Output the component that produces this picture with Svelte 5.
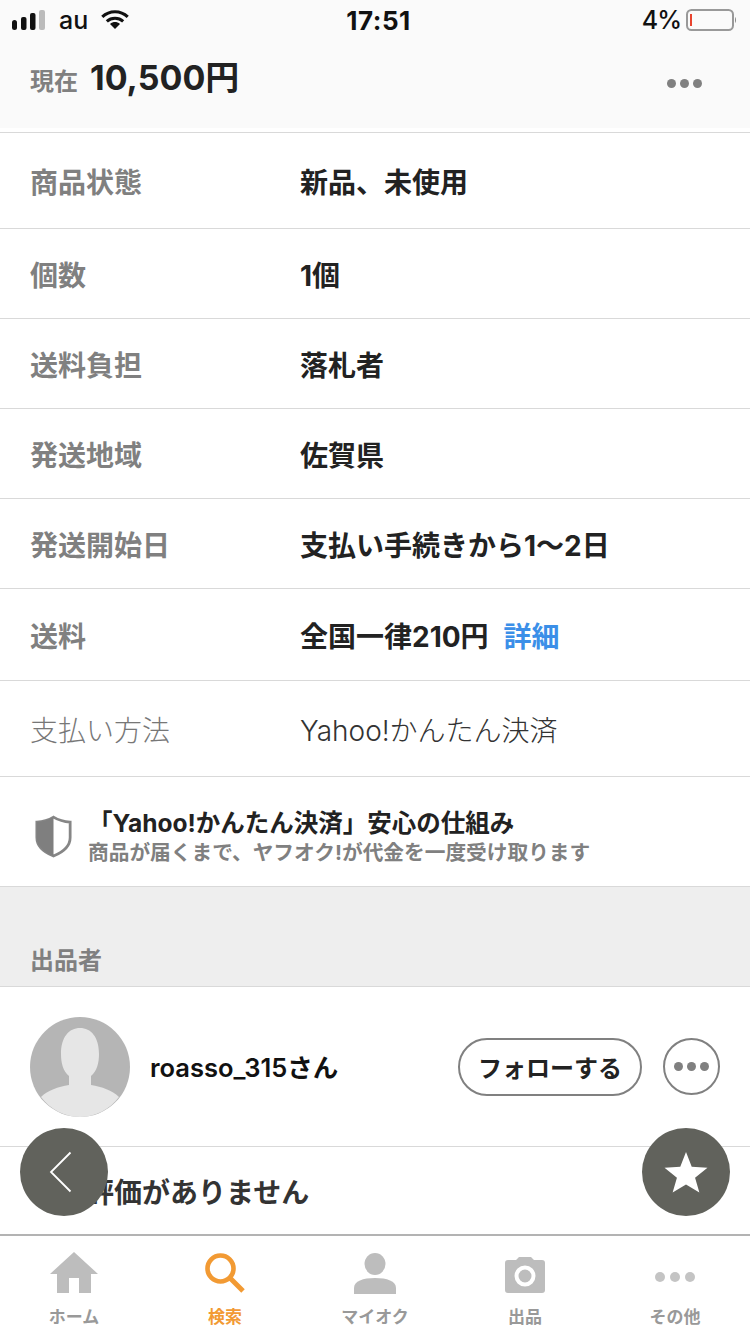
<script>
  const rows = [
    { label: '商品状態', value: '新品、未使用', h: 96 },
    { label: '個数', value: '1個', h: 90 },
    { label: '送料負担', value: '落札者', h: 90 },
    { label: '発送地域', value: '佐賀県', h: 90 },
    { label: '発送開始日', value: '支払い手続きから1〜2日', h: 90 },
    { label: '送料', value: '全国一律210円', link: '詳細', h: 92 },
    { label: '支払い方法', value: 'Yahoo!かんたん決済', plain: true, h: 96 }
  ];
</script>

<div class="page">
  <div class="content">
    <div class="top">
      <div class="status">
        <div class="status-left">
          <svg width="34" height="20" viewBox="0 0 34 20">
            <rect x="0" y="10" width="5" height="10" rx="2.5" fill="#111" />
            <rect x="9" y="7" width="5.500" height="13" rx="2" fill="#111" />
            <rect x="18" y="3" width="5.500" height="17" rx="2" fill="#111" />
            <rect x="27" y="0" width="6" height="20" rx="2" fill="#bbb" />
          </svg>
          <span class="carrier">au</span>
          <svg class="wifi" width="28" height="20" viewBox="0 0 30 22">
            <path d="M1 7.5C9 0 21 0 29 7.5" fill="none" stroke="#111" stroke-width="3.4" />
            <path d="M6 12.5C11 8 19 8 24 12.5" fill="none" stroke="#111" stroke-width="3.4" />
            <path d="M9.5 15.5C13 12.6 17 12.6 20.5 15.5L15 21Z" fill="#111" />
          </svg>
        </div>
        <span class="time">17:51</span>
        <div class="status-right">
          <span class="pct">4%</span>
          <svg width="50" height="24" viewBox="0 0 50 24">
            <rect x="1" y="2" width="46" height="20" rx="4.5" fill="none" stroke="#999" stroke-width="2" />
            <rect x="4" y="6" width="2" height="12" fill="#e8432e" />
            <path d="M49 9C50.3 10 50.3 14 49 15Z" fill="#888" />
          </svg>
        </div>
      </div>
      <div class="price-row">
        <span class="now">現在</span>
        <span class="price">10,500円</span>
        <div class="dots head-dots"><i></i><i></i><i></i></div>
      </div>
    </div>

    <div class="rows">
      {#each rows as row}
        <div class="row" style="height: {row.h}px">
          <span class="label" class:plain={row.plain}>{row.label}</span>
          <span class="value" class:plain={row.plain}>{row.value}{#if row.link}<a href="#top" class="link">{row.link}</a>{/if}</span>
        </div>
      {/each}
    </div>

    <div class="safe">
      <svg class="shield" width="37" height="45" viewBox="0 0 40 46">
        <path d="M20 2C25 5 31 7 38 7.5V24C38 33 30 40 20 44C10 40 2 33 2 24V7.5C9 7 15 5 20 2Z" fill="#fff" stroke="#868686" stroke-width="3" />
        <path d="M20 2C15 5 9 7 2 7.5V24C2 33 10 40 20 44Z" fill="#7f7f7f" />
      </svg>
      <div class="safe-text">
        <div class="safe-title">「Yahoo!かんたん決済」安心の仕組み</div>
        <div class="safe-sub">商品が届くまで、ヤフオク!が代金を一度受け取ります</div>
      </div>
    </div>

    <div class="section">出品者</div>

    <div class="seller">
      <svg class="avatar" width="100" height="100" viewBox="0 0 100 100">
        <circle cx="50" cy="50" r="50" fill="#b5b5b5" />
        <path d="M11 80C18 73 28 70 39 68V59C33 54 31 46 31 37C31 20 39 11 50 11C61 11 69 20 69 37C69 46 67 54 61 59V68C72 70 82 73 89 80C80 92 66 100 50 100C34 100 20 92 11 80Z" fill="#e6e6e6" />
      </svg>
      <span class="seller-name">roasso_315さん</span>
      <div class="follow">フォローする</div>
      <div class="more"><div class="dots"><i></i><i></i><i></i></div></div>
    </div>

    <div class="rating">評価がありません</div>
  </div>

  <button class="fab back" aria-label="戻る">
    <svg width="24" height="42" viewBox="0 0 24 42">
      <path d="M22.500 1.500L3 21L22.500 40.500" fill="none" stroke="#fff" stroke-width="1.800" />
    </svg>
  </button>
  <button class="fab star" aria-label="お気に入り">
    <svg width="44" height="42" viewBox="0 0 46 44">
      <path d="M23 1L29 16.500L45.500 17.500L32.500 28L37 43.500L23 35L9 43.500L13.500 28L0.500 17.500L17 16.500Z" fill="#fff" />
    </svg>
  </button>

  <nav class="tabs">
    <div class="tab first">
      <svg width="48" height="42" viewBox="0 0 48 42">
        <path d="M24 0L48 22H41V41H29V26H19V41H7V22H0Z" fill="#bdbdbd" />
      </svg>
      <span>ホーム</span>
    </div>
    <div class="tab active">
      <svg width="42" height="42" viewBox="0 0 42 42">
        <circle cx="16.500" cy="16.500" r="13" fill="none" stroke="#f29a33" stroke-width="4.600" />
        <path d="M26 26L39 39" fill="none" stroke="#f29a33" stroke-width="5" />
      </svg>
      <span>検索</span>
    </div>
    <div class="tab">
      <svg width="42" height="42" viewBox="0 0 42 42">
        <ellipse cx="21" cy="12" rx="10.500" ry="11" fill="#bdbdbd" />
        <path d="M0 42V36C0 29 9 26 21 26C33 26 42 29 42 36V42Z" fill="#bdbdbd" />
      </svg>
      <span>マイオク</span>
    </div>
    <div class="tab">
      <svg width="42" height="42" viewBox="0 0 42 42">
        <path d="M4 8H12L15 5H27L30 8H38C40 8 41 9 41 11V38C41 40 40 41 38 41H4C2 41 1 40 1 38V11C1 9 2 8 4 8Z" fill="#bdbdbd" />
        <circle cx="21" cy="24" r="8.500" fill="none" stroke="#fff" stroke-width="4" />
      </svg>
      <span>出品</span>
    </div>
    <div class="tab">
      <div class="tab-dots"><i></i><i></i><i></i></div>
      <span>その他</span>
    </div>
  </nav>
</div>

<style>
  :global(body) {
    margin: 0;
    background: #fff;
  }
  .page {
    position: relative;
    width: 750px;
    height: 1334px;
    overflow: hidden;
    display: flex;
    flex-direction: column;
    font-family: Inter, "Noto Sans CJK JP", sans-serif;
    color: #222;
  }
  .content {
    flex: 1;
    min-height: 0;
    overflow: hidden;
  }
  .top {
    height: 128px;
    background: #fafafa;
    margin-bottom: 4px;
  }
  .status {
    height: 40px;
    padding: 0 14px 0 12px;
    display: grid;
    grid-template-columns: 1fr auto 1fr;
    align-items: center;
    color: #111;
  }
  .status-left {
    display: flex;
    align-items: center;
    gap: 13px;
  }
  .status-left .wifi {
    margin-top: 0;
  }
  .carrier {
    font-size: 25px;
    font-weight: 500;
  }
  .time {
    font-size: 26px;
    font-weight: 700;
    letter-spacing: 0.5px;
    margin-left: 9px;
  }
  .status-right {
    display: flex;
    justify-content: flex-end;
    align-items: center;
    gap: 5px;
  }
  .pct {
    font-size: 25px;
    font-weight: 500;
    letter-spacing: -1px;
  }
  .price-row {
    display: flex;
    align-items: baseline;
    padding: 0 48px 0 30px;
    margin-top: 1px;
    height: 72px;
  }
  .now {
    font-size: 24px;
    font-weight: 700;
    color: #808080;
    margin-right: 12px;
  }
  .price {
    font-size: 34px;
    font-weight: 700;
    color: #222;
    line-height: 74px;
  }
  .dots {
    display: flex;
    gap: 4px;
  }
  .dots i {
    width: 9px;
    height: 9px;
    border-radius: 50%;
    background: #808080;
  }
  .head-dots {
    margin-left: auto;
    align-self: center;
    margin-top: 12px;
  }
  .row {
    display: flex;
    align-items: center;
    box-sizing: border-box;
    padding: 4px 30px 0;
    border-top: 1px solid #d9d9d9;
    font-size: 28px;
    line-height: 1;
  }
  .label {
    width: 270px;
    font-weight: 700;
    color: #808080;
  }
  .value {
    font-weight: 700;
    color: #222;
  }
  .label.plain,
  .value.plain {
    font-weight: 300;
    color: #777;
  }
  .value.plain {
    color: #333;
  }
  .link {
    color: #3b8fe8;
    text-decoration: none;
    margin-left: 15px;
  }
  .safe {
    height: 109px;
    border-top: 1px solid #d9d9d9;
    display: flex;
    align-items: center;
    padding-left: 35px;
    gap: 16px;
  }
  .shield {
    margin-top: 10px;
  }
  .safe-text {
    line-height: 1;
    margin-top: 12px;
  }
  .safe-title {
    font-size: 24.500px;
    font-weight: 700;
    color: #222;
    margin-bottom: 7px;
  }
  .safe-sub {
    font-size: 20.700px;
    font-weight: 700;
    color: #808080;
  }
  .section {
    height: 100px;
    box-sizing: border-box;
    background: #eee;
    border-top: 1px solid #d9d9d9;
    padding: 57px 0 0 30px;
    font-size: 24px;
    line-height: 34px;
    font-weight: 700;
    color: #808080;
  }
  .seller {
    height: 159px;
    border-top: 1px solid #d9d9d9;
    display: flex;
    align-items: center;
    padding: 0 30px;
  }
  .avatar {
    flex: none;
    margin-right: 20px;
  }
  .seller-name {
    font-size: 25.500px;
    font-weight: 600;
    color: #111;
    margin-right: auto;
    margin-top: -2px;
  }
  .follow {
    width: 180px;
    height: 54px;
    border: 2px solid #808080;
    border-radius: 30px;
    display: flex;
    align-items: center;
    justify-content: center;
    font-size: 24px;
    font-weight: 700;
    color: #222;
  }
  .more {
    width: 53px;
    height: 53px;
    margin-left: 21px;
    border: 2px solid #808080;
    border-radius: 50%;
    display: flex;
    align-items: center;
    justify-content: center;
  }
  .rating {
    border-top: 1px solid #d9d9d9;
    height: 88px;
    box-sizing: border-box;
    padding: 26px 0 0 86px;
    font-size: 28px;
    line-height: 40px;
    font-weight: 700;
    color: #333;
  }
  .fab {
    position: absolute;
    top: 1128px;
    width: 88px;
    height: 88px;
    padding: 0;
    border: 0;
    border-radius: 50%;
    background: #61625c;
    display: flex;
    align-items: center;
    justify-content: center;
  }
  .fab.back {
    left: 20px;
  }
  .fab.back svg {
    margin-right: 8px;
  }
  .fab.star {
    right: 20px;
  }
  .tabs {
    height: 98px;
    flex: none;
    display: grid;
    grid-template-columns: repeat(5, 150px);
    border-top: 2px solid #b3b3b3;
    background: #fff;
  }
  .tab {
    position: relative;
    display: flex;
    flex-direction: column;
    align-items: center;
    padding-top: 16px;
    color: #999;
  }
  .tab svg {
    height: 42px;
  }
  .tab.first {
    left: -1px;
  }
  .tab span {
    position: absolute;
    top: 71px;
    font-size: 17px;
    line-height: 20px;
    font-weight: 700;
  }
  .tab.active {
    color: #f29a33;
  }
  .tab-dots {
    display: flex;
    gap: 5px;
    height: 42px;
    align-items: center;
    margin: 4px 0 0 -1px;
  }
  .tab-dots i {
    width: 10px;
    height: 10px;
    border-radius: 50%;
    background: #c4c4c4;
  }
</style>
